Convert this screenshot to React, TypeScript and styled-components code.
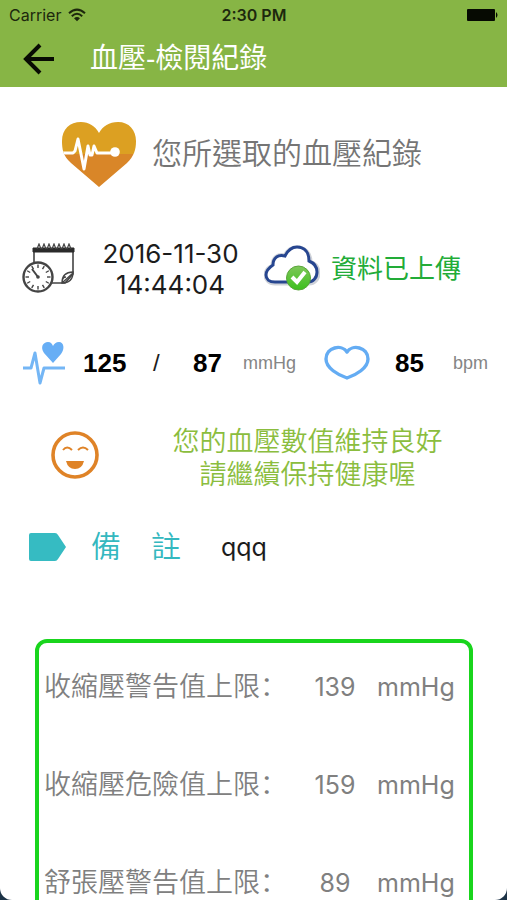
import React from "react";
import styled, { createGlobalStyle } from "styled-components";

const cjk = '"Liberation Sans", "Noto Sans CJK TC", sans-serif';
const latin = `Inter, ${cjk}`;
const arial = '"Liberation Sans", Arial, sans-serif';

const GlobalStyle = createGlobalStyle`
  *, *::before, *::after { box-sizing: border-box; }
  body {
    margin: 0;
    background: #1d3347;
    font-family: ${latin};
    color: #1c1c1c;
  }
`;

const Screen = styled.div`
  display: flex;
  flex-direction: column;
  height: 100vh;
  overflow: hidden;
  background: #fff;
  border-radius: 0 0 12px 12px;
`;

const Header = styled.header`
  flex: none;
  background: #87b545;
`;

const StatusBar = styled.div`
  display: grid;
  grid-template-columns: 1fr auto 1fr;
  align-items: center;
  height: 30px;
  padding: 0 8px 0 9px;
  font-size: 16px;
  color: #1d280d;
`;

const Carrier = styled.span`
  display: flex;
  align-items: center;
  gap: 7px;
`;

const Clock = styled.time`
  font-weight: 600;
`;

const BatteryIcon = styled.svg`
  display: block;
  justify-self: end;
`;

const TitleBar = styled.div`
  display: flex;
  align-items: center;
  gap: 35px;
  height: 57px;
  padding: 0 22px;
`;

const BackButton = styled.button`
  display: flex;
  padding: 0;
  border: 0;
  background: none;
  cursor: pointer;
`;

const Title = styled.h1`
  margin: 0;
  font: 400 28px/40px ${cjk};
  color: #fff;
`;

const Main = styled.main`
  flex: 1;
  min-height: 0;
  overflow-y: auto;
  scrollbar-width: none;
`;

const Icon = styled.svg`
  display: block;
  flex: none;
`;

const Hero = styled.section`
  display: flex;
  align-items: center;
  gap: 14px;
  height: 134px;
  padding-left: 61px;
`;

const HeroTitle = styled.h2`
  margin: 0;
  font: 350 30px/44px ${cjk};
  color: #757575;
`;

const InfoRow = styled.section<{ $columns: string; $indent?: number; $height?: number }>`
  display: grid;
  grid-template-columns: ${(p) => p.$columns};
  align-items: center;
  height: ${(p) => p.$height ?? 92}px;
  padding-left: ${(p) => p.$indent ?? 22}px;
`;

const DateText = styled.time`
  font-size: 26px;
  line-height: 31px;
  text-align: center;
`;

const Uploaded = styled.span`
  font: 400 26px/40px ${cjk};
  color: #22ac38;
`;

const Reading = styled.strong`
  font: 700 26px/32px ${arial};
  color: #000;
`;

const Slash = styled.span`
  font: 400 24px/32px ${arial};
`;

const Unit = styled.span`
  font: 400 18px/32px ${arial};
  color: #858585;
`;

const Advice = styled.p`
  margin: 0;
  padding-top: 8px;
  font: 350 27px/33px ${cjk};
  color: #8bbd3e;
  text-align: center;
`;

const NoteLabel = styled.h3`
  margin: 0;
  font: 350 30px/44px ${cjk};
  color: #34b8bf;
`;

const NoteText = styled.span`
  font-size: 25px;
  line-height: 32px;
`;

const LimitBox = styled.section`
  margin: 46px 34px 24px 35px;
  border: 4px solid #19d51d;
  border-radius: 12px;
`;

const LimitTable = styled.table`
  width: 100%;
  border-collapse: collapse;
  table-layout: fixed;
  color: #808080;
`;

const LimitLabel = styled.th`
  height: 98px;
  padding: 0 0 10px 5px;
  font: 350 27px/32px "Liberation Sans", "Noto Sans CJK SC", sans-serif;
  text-align: left;
  white-space: nowrap;
`;

const LimitValue = styled.td`
  width: 84px;
  padding: 0 0 10px;
  font-size: 25px;
  text-align: center;
`;

const LimitUnit = styled.td`
  width: 92px;
  padding: 0 0 10px;
  font-size: 25px;
`;

const limits = [
  { label: "收縮壓警告值上限：", value: 139 },
  { label: "收縮壓危險值上限：", value: 159 },
  { label: "舒張壓警告值上限：", value: 89 },
];

const WifiIcon = () => (
  <Icon width="18" height="14" viewBox="0 0 18 14" fill="none" stroke="#1d280d" strokeWidth="2">
    <path d="M1 5.2Q9-2 17 5.2M3.8 8.2Q9 3.4 14.2 8.2" />
    <path d="M6 10.3Q9 7.6 12 10.3L9 13.3Z" fill="#1d280d" stroke="none" />
  </Icon>
);

const PulseHeartIcon = () => (
  <Icon width="77" height="68" viewBox="0 0 77 68">
    <defs>
      <clipPath id="heart">
        <path d="M38 67L10 43C2 36 1 29 1 21C1 9 9 2 20 2C28 2 34 6 38 13C42 6 48 2 57 2C68 2 75 10 75 21C75 30 73 36 66 43Z" />
      </clipPath>
    </defs>
    <g clipPath="url(#heart)">
      <path fill="#dca022" d="M0 0H77V34H0Z" />
      <path fill="#d98628" d="M0 34H77V68H0Z" />
      <path
        d="M0 33H12L14 31L17 19L23 49L27 26L29 35L31 35L33 26L36 33H54"
        fill="none"
        stroke="#fff"
        strokeWidth="3"
        strokeLinejoin="round"
      />
      <circle cx="54" cy="32" r="4.8" fill="#fff" />
    </g>
  </Icon>
);

const ticks = [0, 30, 60, 90, 120, 150, 180, 210, 240, 270, 300, 330];

const CalendarIcon = () => (
  <Icon width="54" height="52" viewBox="0 0 54 52" fill="none" stroke="#444">
    <path d="M12 9V24M51 9V31L43 40H30" strokeWidth="1.6" />
    <path d="M11 5H52V9H11Z" fill="#2b2b2b" stroke="#2b2b2b" />
    <path
      d="M15 6L17 1L19 6M20 6L22 1L24 6M25 6L27 1L29 6M30 6L32 1L34 6M35 6L37 1L39 6M40 6L42 1L44 6M45 6L47 1L49 6"
      strokeWidth="1.2"
    />
    <path d="M51 29C46 29 40 31 40 40C48 40 51 36 51 29ZM40 40L51 30M40 40Q40 34 44 34" strokeWidth="1.4" />
    <circle cx="16" cy="34" r="14.5" fill="#fff" strokeWidth="2.4" />
    {ticks.map((angle) => (
      <path key={angle} d="M16 21.5V25" strokeWidth="1.4" transform={`rotate(${angle} 16 34)`} />
    ))}
    <path d="M10 26L16 34" strokeWidth="2" />
    <circle cx="16" cy="34" r="1.8" fill="#444" stroke="none" />
  </Icon>
);

const CloudIcon = () => (
  <Icon width="56" height="48" viewBox="0 0 56 48">
    <defs>
      <linearGradient id="badge" x1="0" y1="0" x2="0" y2="1">
        <stop offset="0" stopColor="#7fc75a" />
        <stop offset="1" stopColor="#3cc01c" />
      </linearGradient>
    </defs>
    <path
      d="M11 38C5 38 2 34 2 30C2 25 6 22 9 21C9 13 14 9 21 11C24 5 28 3 33 3C41 3 46 9 46 17C51 19 54 23 54 28C54 34 50 38 45 38Z"
      fill="#fff"
      stroke="#d0d3d9"
      strokeWidth="5"
    />
    <path
      d="M11 37C5 37 2 34 2 30C2 25 6 22 9 20C9 13 14 9 21 11C24 5 28 2 33 2C41 2 45 8 45 16C50 18 53 22 53 27C53 33 49 37 44 37Z"
      fill="#fff"
      stroke="#274690"
      strokeWidth="3"
    />
    <circle cx="34.500" cy="33" r="12" fill="url(#badge)" stroke="#5aa53b" />
    <path d="M28 32L33 37L41 27" fill="none" stroke="#fff" strokeWidth="4" />
  </Icon>
);

const BloodPressureIcon = () => (
  <Icon width="46" height="46" viewBox="0 0 46 46">
    <path
      d="M1 28H9L13 13L18 43L22 28H43"
      fill="none"
      stroke="#74b6f5"
      strokeWidth="3"
      strokeLinejoin="round"
    />
    <path d="M31 23L22 13C18 7 21 2 26 2C29 2 30 4 31 6C32 4 34 2 37 2C42 2 43 9 39 14Z" fill="#67aef5" />
  </Icon>
);

const HeartOutlineIcon = () => (
  <Icon width="46" height="36" viewBox="0 0 46 36">
    <path
      d="M23 33C14 30 2 23 2 14C2 2 18-1 23 7C28-1 44 2 44 14C44 23 32 30 23 33Z"
      fill="none"
      stroke="#64acf3"
      strokeWidth="3.4"
      strokeLinejoin="round"
    />
  </Icon>
);

const SmileIcon = () => (
  <Icon width="50" height="50" viewBox="0 0 50 50" fill="none" stroke="#df8327">
    <circle cx="25" cy="25" r="22" strokeWidth="3.6" />
    <path d="M13 20Q17 15 22 20M28 20Q33 15 38 20" strokeWidth="2" />
    <path d="M16 31H34Q32 39 25 39Q18 39 16 31Z" fill="#df8327" stroke="none" />
  </Icon>
);

const TagIcon = () => (
  <Icon width="39" height="30" viewBox="0 0 39 30">
    <path d="M3 1H27Q29 1 30 3L38 15L30 27Q29 29 27 29H3Q1 29 1 27V3Q1 1 3 1Z" fill="#36bbc2" />
  </Icon>
);

export default function App() {
  return (
    <>
      <GlobalStyle />
      <Screen>
        <Header>
          <StatusBar>
            <Carrier>
              Carrier
              <WifiIcon />
            </Carrier>
            <Clock>2:30 PM</Clock>
            <BatteryIcon width="33" height="14" viewBox="0 0 33 14">
              <rect x="1" y="1" width="28" height="12" rx="1" fill="#060a02" />
              <path d="M30 4Q33 7 30 10Z" fill="#060a02" />
            </BatteryIcon>
          </StatusBar>
          <TitleBar>
            <BackButton type="button" aria-label="返回">
              <Icon width="33" height="32" viewBox="0 0 33 32" fill="none" stroke="#080b03" strokeWidth="4">
                <path d="M18 2L4 16L18 30M4 16H32" />
              </Icon>
            </BackButton>
            <Title>血壓-檢閱紀錄</Title>
          </TitleBar>
        </Header>

        <Main>
          <Hero>
            <PulseHeartIcon />
            <HeroTitle>您所選取的血壓紀錄</HeroTitle>
          </Hero>

          <InfoRow $columns="55fr 187fr 67fr 176fr" $height={96}>
            <CalendarIcon />
            <DateText dateTime="2016-11-30T14:44:04">
              2016-11-30
              <br />
              14:44:04
            </DateText>
            <CloudIcon />
            <Uploaded>資料已上傳</Uploaded>
          </InfoRow>

          <InfoRow $columns="61fr 70fr 40fr 50fr 81fr 71fr 58fr 54fr">
            <BloodPressureIcon />
            <Reading>125</Reading>
            <Slash>/</Slash>
            <Reading>87</Reading>
            <Unit>mmHg</Unit>
            <HeartOutlineIcon />
            <Reading>85</Reading>
            <Unit>bpm</Unit>
          </InfoRow>

          <InfoRow $columns="58fr 399fr" $indent={50}>
            <SmileIcon />
            <Advice>
              您的血壓數值維持良好
              <br />
              請繼續保持健康喔
            </Advice>
          </InfoRow>

          <InfoRow $columns="63fr 130fr 286fr" $indent={28}>
            <TagIcon />
            <NoteLabel>備　註</NoteLabel>
            <NoteText>qqq</NoteText>
          </InfoRow>

          <LimitBox>
            <LimitTable>
              <tbody>
                {limits.map((limit) => (
                  <tr key={limit.label}>
                    <LimitLabel scope="row">{limit.label}</LimitLabel>
                    <LimitValue>{limit.value}</LimitValue>
                    <LimitUnit>mmHg</LimitUnit>
                  </tr>
                ))}
              </tbody>
            </LimitTable>
          </LimitBox>
        </Main>
      </Screen>
    </>
  );
}
